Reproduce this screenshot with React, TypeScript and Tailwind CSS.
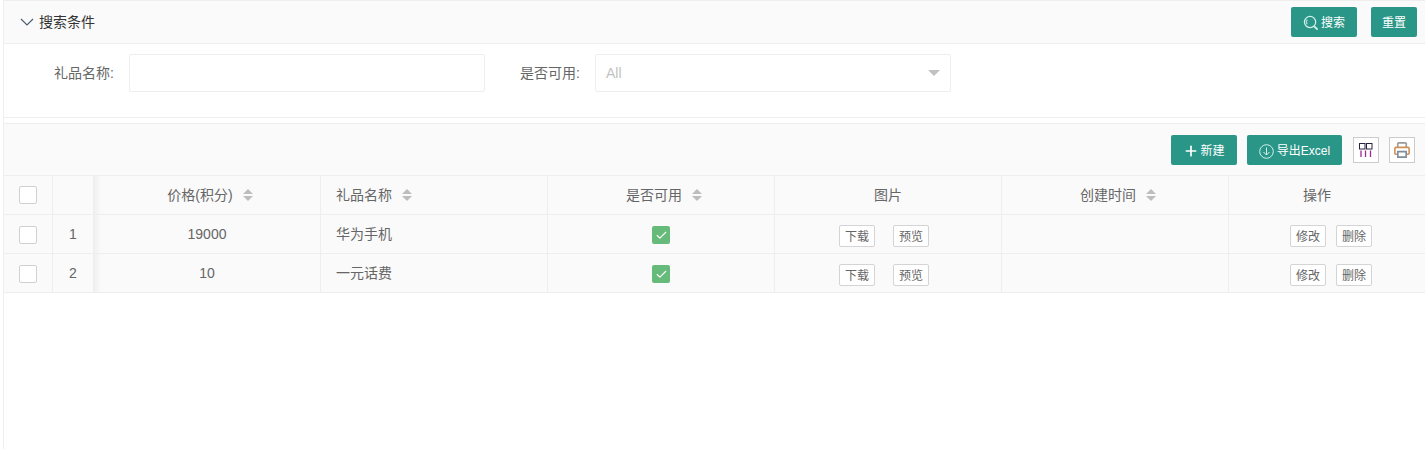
import { Check, Plus } from "lucide-react";

const fontStack = "font-['Liberation_Sans','Noto_Sans_CJK_SC',sans-serif]";

const SortIcon = () => (
  <svg width="10" height="14" viewBox="0 0 10 14" className="shrink-0">
    <path d="M5 1 L10 6 L0 6 Z" fill="#bdbdbd" />
    <path d="M5 13 L10 8 L0 8 Z" fill="#bdbdbd" />
  </svg>
);

const ArrowIcon = () => (
  <svg width="14" height="8" viewBox="0 0 14 8" fill="none" stroke="#4b5f73" strokeWidth="1.2">
    <path d="M1 1 L7 7 L13 1" />
  </svg>
);

const SearchIcon = () => (
  <svg width="16" height="16" viewBox="0 0 17 17" fill="none" stroke="#d4f0ec" strokeWidth="1.3">
    <circle cx="7.5" cy="7.5" r="6" />
    <path d="M12 12 L15.5 15.5" strokeWidth="2" />
    <path d="M4.5 5 A4 4 0 0 0 4.5 10" stroke="#a8dcd4" />
  </svg>
);

const DownloadIcon = () => (
  <svg width="15" height="15" viewBox="0 0 15 15" fill="none" stroke="#d4f0ec" strokeWidth="1">
    <circle cx="7.5" cy="7.5" r="6.8" />
    <path d="M7.5 3.5 V11 M4.5 8 L7.5 11 L10.5 8" />
  </svg>
);

const ColumnsIcon = () => (
  <svg width="14" height="14" viewBox="0 0 14 14" fill="none">
    <rect x="0.5" y="0.5" width="5.5" height="5.5" stroke="#2a2340" />
    <rect x="7.5" y="0.5" width="5.5" height="5.5" stroke="#2a2340" />
    <path d="M2 7.5V14M6.5 7.5V14M11.5 7.5V14" stroke="#9b2a94" strokeWidth="1.3" />
  </svg>
);

const PrinterIcon = () => (
  <svg width="16" height="16" viewBox="0 0 15 15" fill="none" strokeWidth="1.5">
    <path d="M3.5 5 V1.5 Q3.5 0.8 4.5 0.8 H10.5 Q11.5 0.8 11.5 1.5 V5" stroke="#9a9a9a" />
    <path d="M3 11.5 H1.8 Q0.8 11.5 0.8 10 V6.5 Q0.8 5 2 5 H13 Q14.2 5 14.2 6.5 V10 Q14.2 11.5 13.2 11.5 H12" stroke="#cf8f58" />
    <path d="M3.6 9 H11.4 V14.2 H3.6 Z" stroke="#7f8b99" />
  </svg>
);

const Box = () => (
  <div className="h-[18px] w-[18px] rounded-[2px] border border-[#d0d0d0] bg-white" />
);

const GreenCheck = () => (
  <div className="flex h-[18px] w-[18px] items-center justify-center rounded-[2px] bg-[#67bb7a]">
    <Check className="h-[13px] w-[13px] text-white" strokeWidth={2} />
  </div>
);

const SmallBtn = ({ label }: { label: string }) => (
  <button className="flex h-[22px] w-9 items-center justify-center rounded-[2px] border border-[#d4d4d4] bg-white pt-[2px] text-xs text-[#666]">
    {label}
  </button>
);

const rows = [
  { no: 1, price: "19000", name: "华为手机" },
  { no: 2, price: "10", name: "一元话费" },
];

const cell = "flex items-center border-r border-[#eeeeee]";
const fade = "bg-[linear-gradient(90deg,rgba(0,0,0,0.045),transparent_7px)]";
const tealBtn = "flex h-[30px] items-center justify-center rounded-[2px] bg-[#2a9687] pt-[2px] text-xs text-white";

const App = () => {
  return (
    <div className={`${fontStack} h-[449px] overflow-hidden bg-white pl-[3px] text-sm text-[#666]`}>
      <div className="h-full border-l border-[#eeeeee]">
        {/* Search panel */}
        <div className="h-[118px] border-y border-[#eeeeee]">
          <div className="flex h-[43px] items-center justify-between border-b border-[#eeeeee] bg-[#fafafa] pl-4 pr-2">
            <div className="flex items-center gap-[5px] text-[#333]">
              <ArrowIcon />
              <span>搜索条件</span>
            </div>
            <div className="flex items-center gap-[14px]">
              <button className={`${tealBtn} w-[66px] gap-[2px]`}>
                <SearchIcon />
                搜索
              </button>
              <button className={`${tealBtn} w-[46px]`}>重置</button>
            </div>
          </div>
          <div className="flex items-start pt-[10px]">
            <label className="flex h-[38px] w-[110px] items-center justify-end">礼品名称:</label>
            <div className="ml-[15px] h-[38px] w-[356px] rounded-[2px] border border-[#eeeeee]" />
            <label className="flex h-[38px] w-[95px] items-center justify-end">是否可用:</label>
            <div className="ml-[15px] flex h-[38px] w-[356px] items-center justify-between rounded-[2px] border border-[#eeeeee] px-[10px] text-[#c2c2c2]">
              <span>All</span>
              <div className="h-0 w-0 border-x-[6px] border-t-[6px] border-x-transparent border-t-[#c2c2c2]" />
            </div>
          </div>
        </div>

        {/* Table panel */}
        <div className="mt-[5px] border-t border-[#eeeeee] bg-[#fafafa]">
          <div className="flex h-[52px] items-start justify-end gap-[10px] border-b border-[#eeeeee] pr-[10px] pt-[11px]">
            <button className={`${tealBtn} w-[66px] gap-px`}>
              <Plus className="h-4 w-4" strokeWidth={2.5} />
              新建
            </button>
            <button className={`${tealBtn} w-[95px] gap-[3px]`}>
              <DownloadIcon />
              导出Excel
            </button>
            <div className="ml-px mt-[2px] flex h-[26px] w-[26px] items-center justify-center border border-[#cccccc] bg-white">
              <ColumnsIcon />
            </div>
            <div className="mt-[2px] flex h-[26px] w-[26px] items-center justify-center border border-[#cccccc] bg-white">
              <PrinterIcon />
            </div>
          </div>

          {/* Header row */}
          <div className="flex h-[39px] border-b border-[#eeeeee]">
            <div className={`${cell} w-[49px] justify-center`}><Box /></div>
            <div className={`${cell} w-[41px]`} />
            <div className={`${cell} ${fade} w-[227px] justify-center gap-[10px] pl-[6px]`}>价格(积分)<SortIcon /></div>
            <div className={`${cell} w-[227px] gap-[10px] pl-[15px]`}>礼品名称<SortIcon /></div>
            <div className={`${cell} w-[227px] justify-center gap-[10px] pl-[6px]`}>是否可用<SortIcon /></div>
            <div className={`${cell} w-[227px] justify-center`}>图片</div>
            <div className={`${cell} w-[227px] justify-center gap-[10px] pl-[6px]`}>创建时间<SortIcon /></div>
            <div className="flex flex-1 items-center justify-center pr-5">操作</div>
          </div>

          {/* Data rows */}
          {rows.map((r) => (
            <div key={r.no} className="flex h-[39px] border-b border-[#eeeeee]">
              <div className={`${cell} w-[49px] justify-center pt-[2px]`}><Box /></div>
              <div className={`${cell} w-[41px] justify-center`}>{r.no}</div>
              <div className={`${cell} ${fade} w-[227px] justify-center`}>{r.price}</div>
              <div className={`${cell} w-[227px] pl-[15px]`}>{r.name}</div>
              <div className={`${cell} w-[227px] justify-center pt-[2px]`}><GreenCheck /></div>
              <div className={`${cell} w-[227px] justify-center gap-[18px] pr-2 pt-1`}>
                <SmallBtn label="下载" />
                <SmallBtn label="预览" />
              </div>
              <div className={`${cell} w-[227px]`} />
              <div className="flex flex-1 items-center justify-center gap-[10px] pl-2 pt-1">
                <SmallBtn label="修改" />
                <SmallBtn label="删除" />
              </div>
            </div>
          ))}
        </div>
      </div>
    </div>
  );
};

export default App;
